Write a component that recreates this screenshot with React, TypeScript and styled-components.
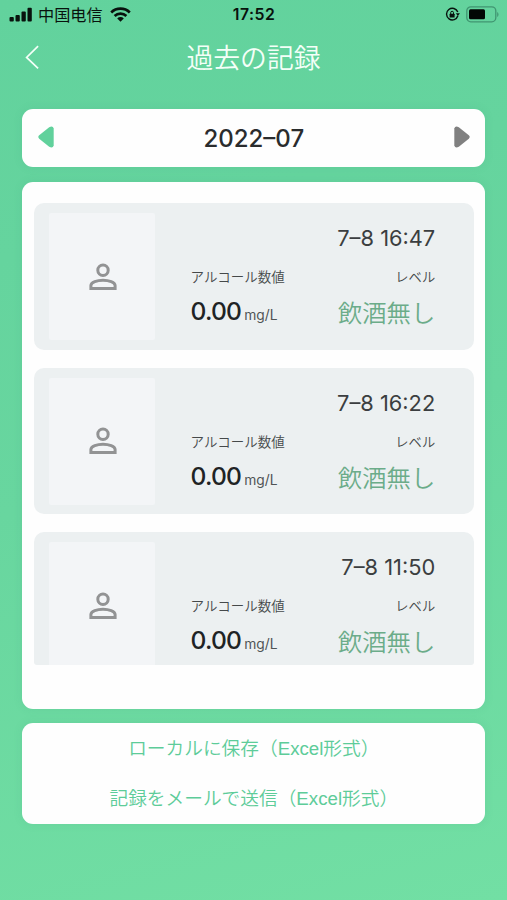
import React from "react";
import styled, { createGlobalStyle } from "styled-components";

const GlobalStyle = createGlobalStyle`
  * { box-sizing: border-box; }
  body { margin: 0; }
`;

const Screen = styled.main`
  width: 507px;
  height: 900px;
  overflow: hidden;
  display: flex;
  flex-direction: column;
  background: linear-gradient(165deg, #62d29d 0%, #68d69f 50%, #72dfa4 100%);
  font-family: Inter, "Noto Sans CJK JP", sans-serif;
  color: #2a2c2d;
`;

const StatusBar = styled.div`
  height: 29px;
  display: grid;
  grid-template-columns: 1fr auto 1fr;
  align-items: center;
  padding: 0 8px 0 9px;
  color: #08120d;
`;

const Carrier = styled.div`
  display: flex;
  align-items: center;
  font: 400 16.2px/26px "Noto Sans CJK SC", sans-serif;
  svg { display: block; }
  span { margin: 0 7px 1px 6px; }
`;

const Clock = styled.time`
  font-size: 15.8px;
  font-weight: 600;
  letter-spacing: 0.5px;
  line-height: 28px;
`;

const StatusIcons = styled.div`
  display: flex;
  justify-content: flex-end;
  align-items: center;
  gap: 6px;
`;

const Header = styled.header`
  height: 79.5px;
  flex: none;
  display: grid;
  grid-template-columns: 60px 1fr 60px;
  color: #f4fff8;
`;

const BackButton = styled.button`
  border: 0;
  background: none;
  color: inherit;
  padding: 16px 0 0 25px;
  display: flex;
  align-items: flex-start;
`;

const Title = styled.h1`
  margin: 0;
  padding-top: 9px;
  text-align: center;
  font-size: 26.8px;
  font-weight: 350;
  line-height: 40px;
`;

const Card = styled.section`
  flex: none;
  margin: 0 21.7px 0 22.3px;
  background: #fefefe;
  border-radius: 11px;
  box-shadow: 0 0 9px rgba(70, 160, 130, 0.16);
`;

const MonthCard = styled(Card)`
  height: 58px;
  display: flex;
  align-items: center;
  justify-content: space-between;
  padding: 0 15.5px;
`;

const ArrowButton = styled.button<{ $color: string }>`
  border: 0;
  padding: 0;
  background: none;
  color: ${(p) => p.$color};
  display: flex;
  margin-top: -2px;
`;

const Month = styled.strong`
  font-size: 24px;
  font-weight: 500;
  line-height: 30px;
  padding-top: 2px;
`;

const ListCard = styled(Card)`
  height: 527.4px;
  margin-top: 15px;
  padding: 21.7px 11.3px 43.5px;
`;

const Records = styled.div`
  height: 100%;
  overflow: hidden;
  display: flex;
  flex-direction: column;
  gap: 18px;
  border-radius: 0 0 3px 3px;
`;

const Record = styled.article`
  height: 146.5px;
  flex: none;
  display: flex;
  padding: 10px 38.8px 10px 15.4px;
  background: #ecf0f1;
  border-radius: 10px;
`;

const Photo = styled.div`
  width: 106px;
  height: 127px;
  display: flex;
  align-items: center;
  justify-content: center;
  padding-left: 2px;
  background: #f3f5f7;
  border-radius: 2px;
`;

const Details = styled.div`
  flex: 1;
  margin-left: 35.6px;
  display: grid;
  grid-template-columns: 1fr auto;
  grid-template-rows: 50px 28px 44px;
  align-items: center;
`;

const RecordTime = styled.time`
  grid-column: 1 / -1;
  justify-self: end;
  font-size: 21.8px;
  line-height: 50px;
  color: #3b3e40;
`;

const Label = styled.span<{ $right?: boolean }>`
  font-size: ${(p) => (p.$right ? 13.3 : 13.5)}px;
  font-weight: 350;
  justify-self: ${(p) => (p.$right ? "end" : "start")};
  line-height: 28px;
  color: #45494a;
`;

const Reading = styled.div`
  display: flex;
  align-items: baseline;
  gap: 3px;
  line-height: 40px;
  strong {
    font-size: 24.6px;
    font-weight: 500;
    letter-spacing: -0.8px;
    color: #202324;
  }
  span { font-size: 13.8px; color: #505455; }
`;

const Level = styled.span`
  font-size: 24.3px;
  font-weight: 350;
  line-height: 44px;
  color: #6bac89;
`;

const Actions = styled(Card)`
  height: 101px;
  margin-top: 14.5px;
  padding-top: 1px;
  display: flex;
  flex-direction: column;
`;

const Action = styled.button`
  height: 50px;
  border: 0;
  padding: 0;
  background: none;
  font: 350 18.7px/50px "Liberation Sans", "Noto Sans CJK JP", sans-serif;
  color: #5dcc99;
`;

const Signal = () => (
  <svg width="23" height="15" viewBox="0 0 23 15" fill="currentColor">
    <rect x="0.5" y="10" width="4.3" height="4.5" rx="1" />
    <rect x="6.5" y="8" width="4.3" height="6.5" rx="1" />
    <rect x="12.5" y="4.5" width="4.3" height="10" rx="1" />
    <rect x="18.5" y="0.8" width="4.3" height="13.7" rx="1" />
  </svg>
);

const Wifi = () => (
  <svg width="21" height="15" viewBox="0 0 21 15" fill="none" stroke="currentColor" strokeWidth="2.6">
    <path d="M1.2 5.5a13.2 13.2 0 0 1 18.6 0" />
    <path d="M4.6 9a8.4 8.4 0 0 1 11.8 0" />
    <path d="M10.5 14.7 7.2 11.4a4.7 4.7 0 0 1 6.6 0Z" fill="currentColor" stroke="none" />
  </svg>
);

const RotationLock = () => (
  <svg width="15" height="15" viewBox="0 0 15 15" fill="none" stroke="currentColor" strokeWidth="1.4">
    <path d="M12.9 8.8A5.8 5.8 0 1 1 12.8 5.1" />
    <path d="M10.8 6.3h4.1L12.9 9Z" fill="currentColor" stroke="none" />
    <rect x="4.6" y="6.7" width="5" height="3.8" rx=".5" fill="currentColor" stroke="none" />
    <path d="M5.7 7V5.7a1.4 1.4 0 0 1 2.8 0V7" strokeWidth="1" />
  </svg>
);

const Battery = () => (
  <svg width="33" height="17" viewBox="0 0 33 17">
    <rect x=".8" y=".8" width="29" height="15" rx="4" fill="none" stroke="#409571" strokeWidth="1.3" />
    <rect x="3" y="3.3" width="16" height="10" rx="1.5" fill="#020704" />
    <path d="M31.2 6v5c1.7-.8 1.7-4.2 0-5Z" fill="#409571" />
  </svg>
);

const Chevron = () => (
  <svg width="15" height="25" viewBox="0 0 15 25" fill="none" stroke="currentColor" strokeWidth="1.7">
    <path d="M13.1 1.2 1.6 12.4 13.1 23.4" />
  </svg>
);

const LeftArrow = () => (
  <svg width="16" height="22" viewBox="0 0 16 22" fill="currentColor">
    <path d="M11.2 1.2 1.2 9.3q-1.8 1.7 0 3.4l10 8.1q3.6 1.8 4.5-1.3V2.5q-.9-3.1-4.5-1.3Z" />
  </svg>
);

const RightArrow = () => (
  <svg width="16" height="22" viewBox="0 0 16 22" fill="currentColor">
    <path d="M4.8 1.2 14.8 9.3q1.8 1.7 0 3.4l-10 8.1Q1.2 22.6.3 19.5V2.5Q1.2-.6 4.8 1.2Z" />
  </svg>
);

const Person = () => (
  <svg width="28" height="28" viewBox="0 0 28 28" fill="none" stroke="#929394" strokeWidth="3">
    <circle cx="14" cy="7.2" r="5.2" />
    <path d="M1.9 25.6v-3.1c0-3.2 6.3-5.3 12.1-5.3s12.1 2.1 12.1 5.3v3.1Z" />
  </svg>
);

const times = ["7–8 16:47", "7–8 16:22", "7–8 11:50"];

export default function App() {
  return (
    <Screen>
      <GlobalStyle />
      <StatusBar>
        <Carrier>
          <Signal />
          <span>中国电信</span>
          <Wifi />
        </Carrier>
        <Clock>17:52</Clock>
        <StatusIcons>
          <RotationLock />
          <Battery />
        </StatusIcons>
      </StatusBar>
      <Header>
        <BackButton aria-label="戻る"><Chevron /></BackButton>
        <Title>過去の記録</Title>
      </Header>
      <MonthCard>
        <ArrowButton $color="#61d19c" aria-label="前月"><LeftArrow /></ArrowButton>
        <Month>2022–07</Month>
        <ArrowButton $color="#808080" aria-label="翌月"><RightArrow /></ArrowButton>
      </MonthCard>
      <ListCard>
        <Records>
          {times.map((time) => (
            <Record key={time}>
              <Photo><Person /></Photo>
              <Details>
                <RecordTime>{time}</RecordTime>
                <Label>アルコール数値</Label>
                <Label $right>レベル</Label>
                <Reading><strong>0.00</strong><span>mg/L</span></Reading>
                <Level>飲酒無し</Level>
              </Details>
            </Record>
          ))}
        </Records>
      </ListCard>
      <Actions>
        <Action>ローカルに保存（Excel形式）</Action>
        <Action>記録をメールで送信（Excel形式）</Action>
      </Actions>
    </Screen>
  );
}
